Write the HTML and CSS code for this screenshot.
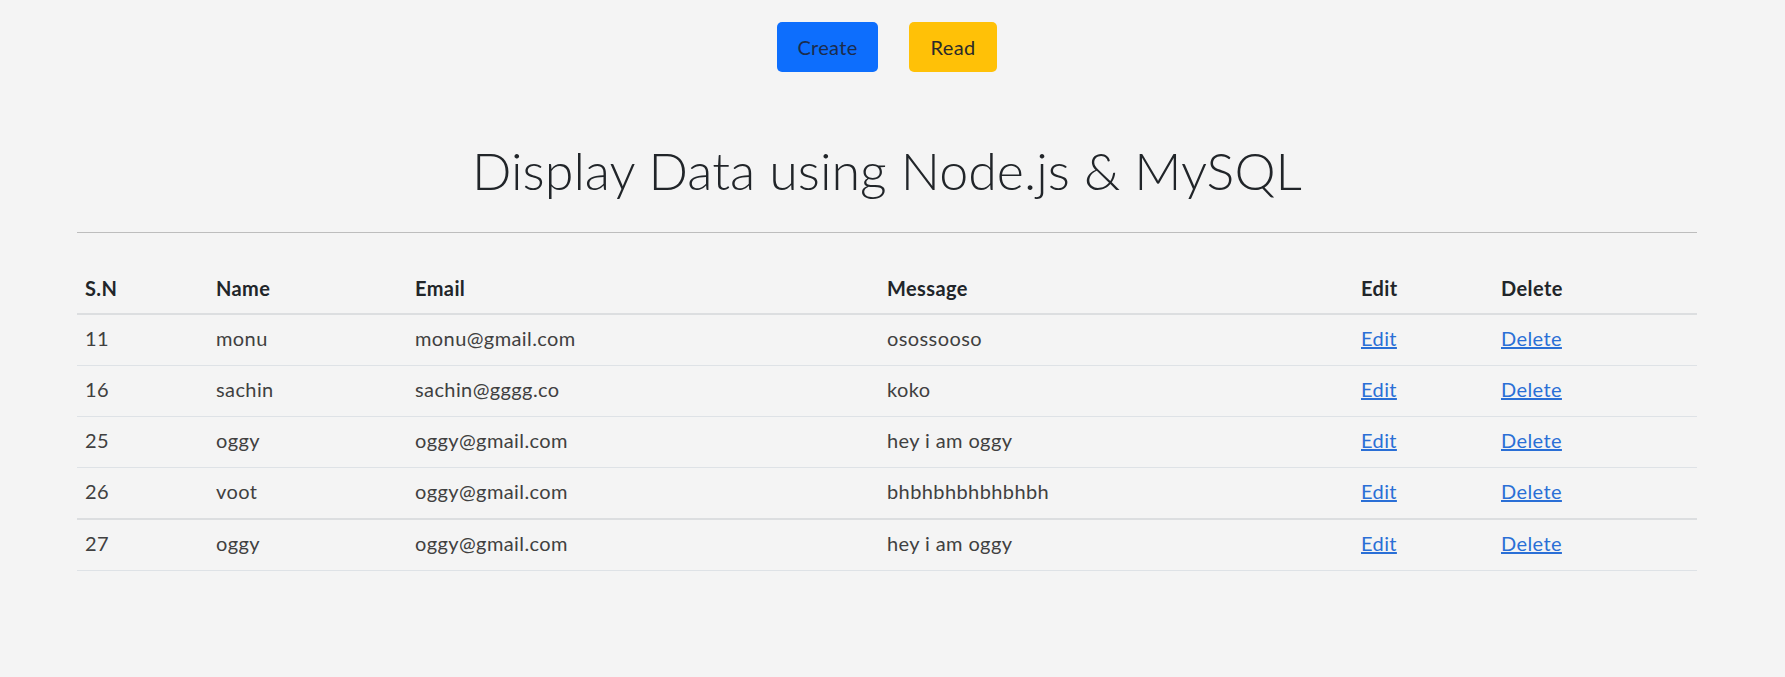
FILE: index.html
```html
<!DOCTYPE html>
<html lang="en">
<head>
<meta charset="utf-8">
<title>Display Data using Node.js &amp; MySQL</title>
<link rel="stylesheet" href="styles.css">
</head>
<body>
<div class="page">
  <div class="actions">
    <a class="btn btn-create" href="#">Create</a>
    <a class="btn btn-read" href="#">Read</a>
  </div>
  <h1 class="title">Display Data using Node.js &amp; MySQL</h1>
  <hr class="rule">
  <table class="data">
    <thead>
      <tr>
        <th class="c-sn">S.N</th>
        <th class="c-name">Name</th>
        <th class="c-email">Email</th>
        <th class="c-msg">Message</th>
        <th class="c-edit">Edit</th>
        <th class="c-del">Delete</th>
      </tr>
    </thead>
    <tbody>
      <tr><td>11</td><td>monu</td><td>monu@gmail.com</td><td>osossooso</td><td><a href="#">Edit</a></td><td><a href="#">Delete</a></td></tr>
      <tr><td>16</td><td>sachin</td><td>sachin@gggg.co</td><td>koko</td><td><a href="#">Edit</a></td><td><a href="#">Delete</a></td></tr>
      <tr><td>25</td><td>oggy</td><td>oggy@gmail.com</td><td>hey i am oggy</td><td><a href="#">Edit</a></td><td><a href="#">Delete</a></td></tr>
      <tr class="sep"><td>26</td><td>voot</td><td>oggy@gmail.com</td><td>bhbhbhbhbhbhbh</td><td><a href="#">Edit</a></td><td><a href="#">Delete</a></td></tr>
      <tr><td>27</td><td>oggy</td><td>oggy@gmail.com</td><td>hey i am oggy</td><td><a href="#">Edit</a></td><td><a href="#">Delete</a></td></tr>
    </tbody>
  </table>
</div>
</body>
</html>
```

FILE: styles.css
```css
html, body {
  margin: 0;
  padding: 0;
  background: #f4f4f4;
}
body {
  font-family: "Lato", "Open Sans", sans-serif;
  color: #212529;
}
.page {
  padding: 22px 88px 40px 77px;
}
.actions {
  display: flex;
  justify-content: center;
  gap: 31px;
}
.btn {
  display: inline-flex;
  align-items: center;
  justify-content: center;
  height: 50px;
  box-sizing: border-box;
  border-radius: 5px;
  font-size: 20px;
  font-weight: 400;
  letter-spacing: 0.3px;
  color: #2a2a2a;
  text-decoration: none;
}
.btn-create {
  width: 101px;
  background: #0d6efd;
  color: #1c2c4c;
}
.btn-read {
  width: 88px;
  background: #ffc107;
}
.title {
  margin: 68px 0 0;
  text-align: center;
  font-size: 52px;
  font-weight: 300;
  line-height: 60px;
  color: #212529;
}
.rule {
  margin: 32px 0 31px;
  border: 0;
  border-top: 1px solid #bdbdbd;
  height: 0;
}
.data {
  width: 100%;
  border-collapse: collapse;
  table-layout: fixed;
  font-size: 20px;
}
.data th,
.data td {
  box-sizing: border-box;
  text-align: left;
  line-height: 30px;
  letter-spacing: 0.4px;
}
.data th {
  padding: 9px 8px 10px;
  font-weight: 700;
  color: #212529;
  border-bottom: 2px solid #dcdee0;
}
.data td {
  padding: 8px 8px 12px;
  font-weight: 400;
  color: #404040;
  border-bottom: 1px solid #dee2e6;
}
.data tr.sep td {
  border-bottom: 2px solid #dcdee0;
}
.data a {
  color: #2a6fd6;
  text-decoration: underline;
}
.c-sn { width: 131px; }
.c-name { width: 199px; }
.c-email { width: 472px; }
.c-msg { width: 474px; }
.c-edit { width: 140px; }
.c-del { width: 204px; }
```
